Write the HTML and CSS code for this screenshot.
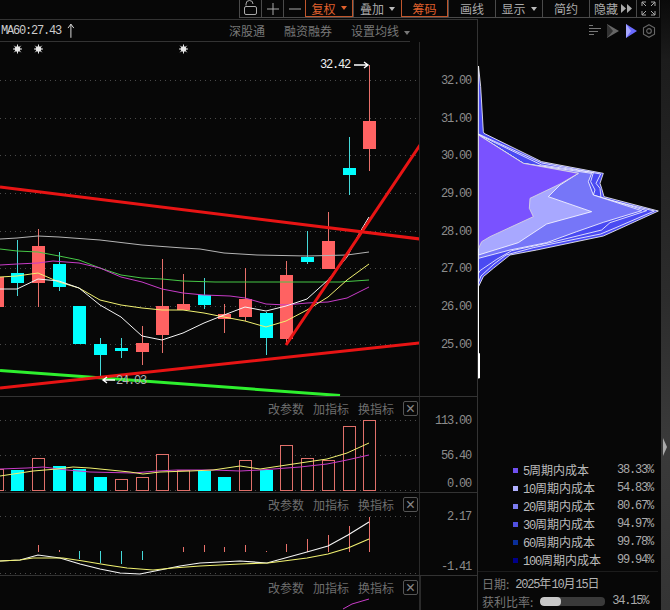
FILE: index.html
```html
<!DOCTYPE html>
<html lang="zh-CN">
<head>
<meta charset="utf-8">
<title>筹码</title>
<link rel="stylesheet" href="styles.css">
</head>
<body>
<div class="app">
  <div class="left">
    <nav class="toolbar">
      <div class="tool-group">
        <button class="tool w-22"><svg width="18" height="17" viewBox="0 0 18 17"><path class="ico" d="M4 5.500V4a3.500 3.500 0 0 1 7 0" /><rect class="ico" x="2.500" y="6.500" width="12" height="8" rx="1.500"/></svg></button>
        <button class="tool w-22"><svg width="14" height="14" viewBox="0 0 14 14"><path class="ico" d="M7 1v12M1 7h12"/></svg></button>
        <button class="tool w-22"><svg width="14" height="14" viewBox="0 0 14 14"><path class="ico" d="M1 7h12"/></svg></button>
        <button class="tool active w-48">复权<i class="caret"></i></button>
        <button class="tool w-48">叠加<i class="caret"></i></button>
        <button class="tool active w-47">筹码</button>
        <button class="tool w-47">画线</button>
        <button class="tool w-47">显示<i class="caret"></i></button>
        <button class="tool w-47">简约</button>
        <button class="tool w-47">隐藏<svg class="ff" width="11" height="9" viewBox="0 0 11 9"><path fill="#aaa" d="M0 0l5 4.500L0 9zM6 0l5 4.500L6 9z"/></svg></button>
        <button class="tool w-23"><svg width="15" height="15" viewBox="0 0 15 15"><path class="ico" d="M1 5V1h4M14 5V1h-4M1 10v4h4M14 10v4h-4M1 1l4 4M14 1l-4 4M1 14l4-4M14 14l-4-4"/></svg></button>
      </div>
    </nav>
    <div class="workspace">
      <main class="charts">
        <header class="info">
          <div class="info-bar">
            <span class="ma">MA60:27.43</span>
            <svg class="up-arrow" width="8" height="15" viewBox="0 0 8 15"><path d="M4 15V1M1 5l3-4 3 4" fill="none" stroke="#ddd"/></svg>
            <span class="info-link">深股通</span>
            <span class="info-link">融资融券</span>
            <span class="info-link">设置均线<i class="caret grey"></i></span>
          </div>
        </header>

        <section class="panel panel-main">
          <svg class="plot" viewBox="0 42 419 354" width="419" height="354">
            <g class="grid">
              <path d="M0 80.500H420M0 118.500H420M0 155.500H420M0 193.500H420M0 231.500H420M0 268.500H420M0 306.500H420M0 344.500H420"/>
            </g>
            <g class="stars">
              <circle cx="17.500" cy="49" r="2.800"/><circle cx="38.500" cy="49" r="2.800"/><circle cx="183.500" cy="49" r="2.800"/>
              <path d="M17.500 44.500v9M13 49h9M14.300 45.800l6.400 6.400M20.700 45.800l-6.400 6.400"/>
              <path d="M38.500 44.500v9M34 49h9M35.300 45.800l6.400 6.400M41.700 45.800l-6.400 6.400"/>
              <path d="M183.500 44.500v9M179 49h9M180.300 45.800l6.400 6.400M186.700 45.800l-6.400 6.400"/>
            </g>
            <g class="wick-d">
              <path d="M17.500 240V296M59.500 252V291M100.500 338V377M121.500 338V358M204.500 278V309M266.500 312V355M307.500 231V264M349.500 137V195"/>
            </g>
            <g class="wick-u">
              <path d="M38.500 229V307M142.500 326V365M162.500 259V353M183.500 274V310M224.500 304V333M245.500 268V321M286.500 261V343M328.500 212V269M369.500 65V171"/>
            </g>
            <g class="body-d">
              <rect x="11" y="273" width="13" height="10"/>
              <rect x="53" y="264" width="13" height="23"/>
              <rect x="73" y="306" width="13" height="38"/>
              <rect x="94" y="344" width="13" height="11"/>
              <rect x="115" y="348" width="13" height="3"/>
              <rect x="198" y="295" width="13" height="10"/>
              <rect x="260" y="313" width="13" height="25"/>
              <rect x="301" y="257" width="13" height="5"/>
              <rect x="343" y="168" width="13" height="7"/>
            </g>
            <g class="body-u">
              <rect x="-9" y="277" width="13" height="30"/>
              <rect x="32" y="246" width="13" height="37"/>
              <rect x="136" y="343" width="13" height="9"/>
              <rect x="156" y="306" width="13" height="29"/>
              <rect x="177" y="304" width="13" height="6"/>
              <rect x="218" y="314" width="13" height="5"/>
              <rect x="239" y="299" width="13" height="18"/>
              <rect x="280" y="275" width="13" height="64"/>
              <rect x="322" y="241" width="13" height="28"/>
              <rect x="363" y="121" width="13" height="28"/>
            </g>
            <polyline class="ln grey-ln" points="0,239 17,238 38,236 59,237 100,240 142,245 183,248 200,249 224,253 257,255 307,256 347,255 369,252"/>
            <polyline class="ln green-ln" points="0,249 17,251 38,252 59,256 79,260 100,268 121,275 142,278 162,279 183,281 215,282 340,282 369,280"/>
            <polyline class="ln magenta-ln" points="0,265 17,264 38,263 53,261 79,263 100,268 121,277 142,282 162,289 183,293 204,295 230,296 245,298 266,304 286,305 307,303 328,302 347,298 369,287"/>
            <polyline class="ln yellow-ln" points="0,277 17,276 38,273 59,282 79,288 100,300 121,305 142,308 162,310 183,310 204,313 224,317 245,321 266,327 286,321 307,310 328,297 347,280 369,264"/>
            <polyline class="ln white-ln" points="0,289 17,289 38,279 59,281 79,288 100,305 121,317 142,336 162,340 183,333 204,323 224,315 245,307 266,311 286,306 307,299 328,280 347,257 360,232 369,217"/>
            <path class="trend green-trend" d="M0 370.500L340 395.500"/>
            <path class="trend red-trend" d="M0 187L420 239M0 388L420 343M286 345L420 145"/>
            <path class="note-arrow" d="M354 65H368M364 62l4 3-4 3"/>
            <text class="hi" x="320" y="68">32.42</text>
            <path class="note-arrow" d="M115 380H103M107 377l-4 3 4 3"/>
            <text class="lo" x="116" y="384">24.03</text>
          </svg>
          <svg class="axis" viewBox="420 42 57 354" width="58" height="354">
            <text x="441" y="84">32.00</text>
            <text x="441" y="122">31.00</text>
            <text x="441" y="159">30.00</text>
            <text x="441" y="197">29.00</text>
            <text x="441" y="235">28.00</text>
            <text x="441" y="272">27.00</text>
            <text x="441" y="310">26.00</text>
            <text x="441" y="348">25.00</text>
          </svg>
        </section>

        <section class="panel panel-vol">
          <div class="tools"><span>改参数</span><span>加指标</span><span>换指标</span><button class="close">×</button></div>
          <svg class="plot" viewBox="0 397 419 95" width="419" height="95">
            <g class="grid"><path d="M0 420.500H420M0 455.500H420M0 490.500H420"/></g>
            <g class="vol-d">
              <rect x="11" y="470" width="13" height="21"/>
              <rect x="53" y="466" width="13" height="25"/>
              <rect x="73" y="469" width="13" height="22"/>
              <rect x="94" y="477" width="13" height="14"/>
              <rect x="198" y="471" width="13" height="20"/>
              <rect x="218" y="477" width="13" height="14"/>
              <rect x="260" y="470" width="13" height="21"/>
            </g>
            <g class="vol-u">
              <rect x="-9.500" y="469.500" width="13" height="21"/>
              <rect x="32.500" y="458.500" width="12" height="32"/>
              <rect x="115.500" y="479.500" width="12" height="11"/>
              <rect x="136.500" y="477.500" width="12" height="13"/>
              <rect x="156.500" y="454.500" width="12" height="36"/>
              <rect x="177.500" y="470.500" width="12" height="20"/>
              <rect x="239.500" y="460.500" width="12" height="30"/>
              <rect x="280.500" y="445.500" width="12" height="45"/>
              <rect x="301.500" y="458.500" width="12" height="32"/>
              <rect x="322.500" y="460.500" width="12" height="30"/>
              <rect x="343.500" y="426.500" width="12" height="64"/>
              <rect x="363.500" y="420.500" width="12" height="70"/>
            </g>
            <polyline class="ln magenta-ln" points="0,469 27,468 43,467 67,470 90,472 133,473 157,471 177,470 213,470 240,471 260,470 300,467 327,464 347,460 369,455"/>
            <polyline class="ln yellow-ln" points="0,476 20,473 33,471 57,469 73,467 90,468 110,470 130,472 143,474 160,472 190,471 213,470 240,466 260,469 280,466 300,463 327,459 347,453 369,443"/>
          </svg>
          <svg class="axis" viewBox="420 397 57 95" width="58" height="95">
            <text x="435" y="424">113.00</text>
            <text x="441" y="459">56.40</text>
            <text x="447" y="487">0.00</text>
          </svg>
        </section>

        <section class="panel panel-macd">
          <div class="tools"><span>改参数</span><span>加指标</span><span>换指标</span><button class="close">×</button></div>
          <svg class="plot" viewBox="0 493 419 82" width="419" height="82">
            <g class="grid"><path d="M0 516.500H420M0 573.500H420"/></g>
            <g class="wick-u">
              <path d="M38.500 545V552M59.500 550V552M183.500 547V552M204.500 545V552M224.500 547V552M245.500 545V552M266.500 551V552M286.500 544V552M307.500 539V552M328.500 535V552M349.500 526V552M369.500 517V552"/>
            </g>
            <g class="wick-d">
              <path d="M79.500 551V559M100.500 551V563M121.500 551V564M142.500 551V560"/>
            </g>
            <polyline class="ln2 white-ln" points="0,561 20,560 38,555 60,558 80,564 100,569 120,573 140,574 160,570 180,566 200,563 240,561 267,563 307,552 328,546 348,535 369,522"/>
            <polyline class="ln2 yellow-ln" points="0,561 20,560 33,558 63,558 83,561 107,565 127,568 153,570 173,568 200,566 240,564 268,563 307,558 328,554 348,548 369,539"/>
          </svg>
          <svg class="axis" viewBox="420 493 57 82" width="58" height="82">
            <text x="447" y="520">2.17</text>
            <text x="441" y="570">-1.41</text>
          </svg>
        </section>

        <section class="panel panel-last">
          <div class="tools"><span>改参数</span><span>加指标</span><span>换指标</span><button class="close">×</button></div>
          <svg class="plot" viewBox="0 576 419 34" width="419" height="34">
            <polyline class="ln magenta-ln" points="343,609 352,604 369,599"/>
          </svg>
          <div class="axis-empty"></div>
        </section>
      </main>

      <aside class="chips">
        <div class="chip-tools">
          <svg class="ct-lines" width="12" height="12" viewBox="0 0 12 12"><path fill="none" stroke="#777" d="M0 .5h4M0 3.500h12M0 6.500h9M0 9.500h5"/></svg>
          <svg class="ct-grey" width="12" height="14" viewBox="0 0 12 14"><path fill="#666" d="M0 0l12 7L0 14z"/><path fill="#333" d="M0 0l6 7L0 14z"/></svg>
          <svg class="ct-blue" width="11" height="14" viewBox="0 0 11 14"><path fill="#6a6aff" d="M0 0l11 7L0 14z"/><path fill="#a8a8ff" d="M0 0l5 7L0 14z"/></svg>
          <svg class="ct-gear" width="14" height="14" viewBox="0 0 15 15"><path fill="none" stroke="#666" stroke-width="1.200" d="M7.500 .7l5.900 3.400v6.800l-5.900 3.400-5.900-3.400V4.100z"/><circle cx="7.500" cy="7.500" r="2.500" fill="none" stroke="#666" stroke-width="1.200"/></svg>
        </div>
        <svg class="dist" viewBox="24 0 549 990" width="183" height="330">
          <path class="spine" d="M25.500 640V955"/>
          <path class="spine thick" d="M27 880V955"/>
          <polygon class="lay l100" points="25.500,18 32,80 40,215 42,220 215,305 400,340 390,370 395,385 402,410 565,453 440,510 400,528 200,570 120,585 70,625 40,650 25.500,680"/>
          <polygon class="lay l100" points="25.500,222 215,309 392,342 378,370 390,385 393,414 553,453 435,504 392,522 190,563 108,585 72,612 33,648 25.500,668"/>
          <polygon class="lay l100" points="25.500,224 215,315 370,338 362,365 375,390 370,405 530,452 420,488 395,510 240,548 125,572 80,598 30,632 25.500,640"/>
          <polygon class="lay l20" points="25.500,225 160,310 365,340 355,365 370,405 515,452 400,487 320,515 230,548 120,570 25.500,595"/>
          <polygon class="lay l10" points="25.500,225 160,310 325,340 270,375 235,410 365,455 230,492 145,548 25.500,585"/>
          <polygon class="lay l5" points="25.500,225 160,310 325,340 270,372 180,415 178,445 190,470 60,530 35,545 25.500,565"/>
        </svg>
        <ul class="legend">
          <li><i class="sw s5"></i><span class="cost"><span class="num">5</span>周期内成本</span><span class="pct">38.33%</span></li>
          <li><i class="sw s10"></i><span class="cost"><span class="num">10</span>周期内成本</span><span class="pct">54.83%</span></li>
          <li><i class="sw s20"></i><span class="cost"><span class="num">20</span>周期内成本</span><span class="pct">80.67%</span></li>
          <li><i class="sw s30"></i><span class="cost"><span class="num">30</span>周期内成本</span><span class="pct">94.97%</span></li>
          <li><i class="sw s60"></i><span class="cost"><span class="num">60</span>周期内成本</span><span class="pct">99.78%</span></li>
          <li><i class="sw s100"></i><span class="cost"><span class="num">100</span>周期内成本</span><span class="pct">99.94%</span></li>
        </ul>
        <footer class="summary">
          <div class="sum-row"><span class="sum-label">日期:</span><span class="sum-date"><span class="num">2025</span>年<span class="num">10</span>月<span class="num">15</span>日</span></div>
          <div class="sum-row"><span class="sum-label">获利比率:</span><span class="track"><span class="fill" style="width:32%"></span></span><span class="rate">34.15%</span></div>
        </footer>
      </aside>
    </div>
  </div>
  <div class="strip"><i class="strip-arrow"></i></div>
</div>
</body>
</html>
```

FILE: styles.css
```css
* { box-sizing: border-box; }
html, body { margin: 0; height: 100%; background: #070707; overflow: hidden; }
body { font-family: "Noto Sans CJK SC", "Liberation Sans", sans-serif; font-size: 12px; color: #bbb; }
button { font: inherit; background: none; padding: 0; border: 0; color: inherit; }
ul { list-style: none; margin: 0; padding: 0; }

.app { display: grid; grid-template-columns: 661px 9px; width: 670px; height: 610px; }
.left { display: flex; flex-direction: column; min-width: 0; }
.strip { position: relative; background: linear-gradient(#0a0a0a 0, #1c1c1c 60px, #2c2c2c 300px, #3a3a3a 440px, #343434 610px); }
.strip-arrow { position: absolute; left: 2px; top: 438px; border-left: 4px solid #aaa; border-top: 9px solid transparent; border-bottom: 9px solid transparent; }

.toolbar { height: 19px; display: flex; justify-content: flex-end; }
.tool-group { display: flex; height: 18px; margin-right: 1px; border-right: 1px solid #4a4a4a; border-bottom: 1px solid #4a4a4a; }
.tool { height: 17px; display: flex; align-items: center; justify-content: center; gap: 5px; color: #aaa; border-left: 1px solid #4a4a4a; line-height: 15px; white-space: nowrap; }
.w-22 { width: 22px; }
.w-23 { width: 23px; }
.w-47 { width: 47px; }
.w-48 { width: 48px; }
.tool.active { color: #e0602c; border: 1px solid #c0562c; border-top: 0; }
.ico { fill: none; stroke: #aaa; stroke-width: 1; }
.ff { margin-left: -2px; }
.caret { display: inline-block; width: 0; height: 0; border-left: 3px solid transparent; border-right: 3px solid transparent; border-top: 4px solid #bbb; }
.active .caret { border-top-color: #e0602c; }
.caret.grey { border-top-color: #777; margin-left: 5px; vertical-align: middle; }

.workspace { flex: 1; display: flex; min-height: 0; }
.charts { width: 478px; display: flex; flex-direction: column; border-right: 1px solid #333; border-top: 1px solid #333; }

.info { height: 22px; flex: none; }
.info-bar { width: 410px; height: 22px; display: flex; align-items: center; border-bottom: 1px solid #333; color: #777; }
.ma { font-family: "Liberation Mono", monospace; font-size: 12px; letter-spacing: -1.2px; color: #ccc; margin-left: 1px; width: 68px; }
.up-arrow { margin-right: 154px; }
.info-link { margin-right: 19px; white-space: nowrap; }
.info-link:last-child { margin-right: 0; }

.panel { position: relative; display: flex; flex: none; }
.panel-main { height: 354px; }
.panel-vol { height: 96px; border-top: 1px solid #333; }
.panel-macd { height: 83px; border-top: 1px solid #333; }
.panel-last { height: 35px; border-top: 1px solid #333; }
.plot { display: block; flex: none; overflow: hidden; }
.axis { display: block; flex: none; border-left: 1px solid #2a2a2a; }
.axis-empty { width: 58px; border-left: 2px solid #2a2a2a; }
.axis text { font-family: "Liberation Mono", monospace; font-size: 12px; letter-spacing: -1.2px; fill: #8c8c8c; }

.tools { position: absolute; right: 59px; top: 4px; display: flex; align-items: center; gap: 9px; color: #6e6e6e; line-height: 15px; z-index: 1; }
.close { width: 15px; height: 15px; border: 1px solid #555; border-radius: 2px; color: #888; font-family: "Liberation Sans", sans-serif; font-size: 16px; line-height: 12px; text-align: center; }

.grid path { stroke: #4a4a4a; fill: none; stroke-dasharray: 1 4; }
.stars path { stroke: #e8e8e8; fill: none; stroke-width: 1; }
.stars circle { fill: #e8e8e8; }
.wick-d path { stroke: #45d8d8; fill: none; }
.wick-u path { stroke: #e8706a; fill: none; }
.body-d rect, .vol-d rect { fill: #00ffff; }
.body-u rect { fill: #ff6262; }
.vol-u rect { fill: #070707; stroke: #e0706a; shape-rendering: crispEdges; }
.ln { fill: none; stroke-width: 1; }
.ln2 { fill: none; stroke-width: 1.2; }
.grey-ln { stroke: #b4b4b4; }
.green-ln { stroke: #46c846; }
.magenta-ln { stroke: #c83cc8; }
.yellow-ln { stroke: #f0f070; }
.white-ln { stroke: #f4f4f4; }
.trend { fill: none; stroke-width: 3; }
.red-trend { stroke: #e81414; }
.green-trend { stroke: #2ef02e; }
.note-arrow { fill: none; stroke: #fff; stroke-width: 1.4; }
.hi, .lo { font-family: "Liberation Mono", monospace; font-size: 12px; letter-spacing: -1.2px; }
.hi { fill: #eee; }
.lo { fill: #b4b4b4; }

.chips { flex: 1; min-width: 0; display: flex; flex-direction: column; }
.chip-tools { height: 41px; padding: 5px 5px 0 0; display: flex; justify-content: flex-end; align-items: flex-start; }
.ct-lines { margin-top: 1px; }
.ct-grey { margin-left: 6px; }
.ct-blue { margin-left: 7px; }
.ct-gear { margin-left: 5px; }
.dist { display: block; flex: none; }
.spine { stroke: #fff; stroke-width: 3; fill: none; }
.spine.thick { stroke-width: 6; }
.lay { stroke: #fff; stroke-width: 2.4; }
.l100 { fill: #4a4af2; }
.l20 { fill: #7676f8; }
.l10 { fill: #a8a8ff; }
.l5 { fill: #7a52ff; stroke: #ddd; }

.legend { margin-top: 71px; padding-left: 35px; padding-right: 8px; }
.legend li { display: flex; align-items: center; height: 18px; white-space: nowrap; }
.sw { width: 5px; height: 5px; margin-right: 5px; flex: none; }
.s5 { background: #7050f0; }
.s10 { background: #b0b0ff; }
.s20 { background: #7b7bf0; }
.s30 { background: #5050e0; }
.s60 { background: #0a2f9a; }
.s100 { background: #00008a; }
.cost { flex: 1; color: #bbb; }
.num { font-family: "Liberation Mono", monospace; letter-spacing: -1.2px; }
.pct, .rate { font-family: "Liberation Mono", monospace; letter-spacing: -1.2px; color: #aaa; }

.summary { margin: 2px 3px 0 0; border-top: 1px solid #1c1c1c; padding: 2px 0 0 4px; }
.sum-row { display: flex; align-items: center; height: 18px; white-space: nowrap; }
.sum-label { color: #777; }
.sum-date { margin-left: 6px; color: #b4b4b4; }
.track { width: 65px; height: 9px; margin-left: 7px; background: #3a3a3a; border-radius: 4px; overflow: hidden; }
.fill { display: block; height: 100%; background: #c8c8c8; border-radius: 4px; }
.rate { margin-left: 7px; }
```
